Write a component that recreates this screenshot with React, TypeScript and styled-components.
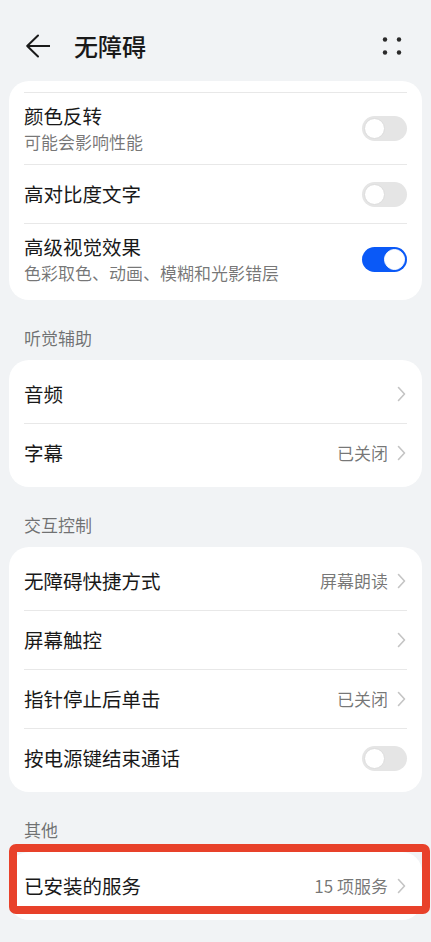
import * as React from 'react';
import styled, { createGlobalStyle } from 'styled-components';

const GlobalStyle = createGlobalStyle`
  html, body {
    margin: 0;
    padding: 0;
    background: #f1f3f5;
  }
  body {
    font-family: "Noto Sans CJK SC", "Noto Sans", "Liberation Sans", sans-serif;
    color: #191919;
    -webkit-font-smoothing: antialiased;
  }
`;

type Item = {
  title: string;
  sub?: string;
  value?: string;
  toggle?: boolean;
  on?: boolean;
};

type Section = {
  label?: string;
  clipped?: boolean;
  marked?: boolean;
  items: Item[];
};

const sections: Section[] = [
  {
    clipped: true,
    items: [
      { title: '颜色反转', sub: '可能会影响性能', toggle: true },
      { title: '高对比度文字', toggle: true },
      { title: '高级视觉效果', sub: '色彩取色、动画、模糊和光影错层', toggle: true, on: true },
    ],
  },
  {
    label: '听觉辅助',
    items: [{ title: '音频' }, { title: '字幕', value: '已关闭' }],
  },
  {
    label: '交互控制',
    items: [
      { title: '无障碍快捷方式', value: '屏幕朗读' },
      { title: '屏幕触控' },
      { title: '指针停止后单击', value: '已关闭' },
      { title: '按电源键结束通话', toggle: true },
    ],
  },
  {
    label: '其他',
    marked: true,
    items: [{ title: '已安装的服务', value: '15 项服务' }],
  },
];

const BackIcon = () => (
  <svg width="24" height="24" viewBox="0 0 24 24" fill="none">
    <path
      d="M12 1.5 L1.2 12 L12 22.5 M1.2 12 H24"
      stroke="#1a1a1a"
      strokeWidth="2"
      strokeLinecap="round"
      strokeLinejoin="round"
    />
  </svg>
);

const MoreIcon = () => (
  <svg width="24" height="24" viewBox="0 0 24 24" fill="#2a2a2a">
    <circle cx="5" cy="5.5" r="2.2" />
    <circle cx="19" cy="5.5" r="2.2" />
    <circle cx="5" cy="18.5" r="2.2" />
    <circle cx="19" cy="18.5" r="2.2" />
  </svg>
);

const Chevron = () => (
  <svg width="12" height="16" viewBox="0 0 12 16" fill="none">
    <path
      d="M2.5 1.5 L8.5 8 L2.5 14.5"
      stroke="#c4c4c4"
      strokeWidth="1.6"
      strokeLinecap="round"
      strokeLinejoin="round"
    />
  </svg>
);

const Accessibility: React.FC = () => {
  return (
    <Page>
      <GlobalStyle />
      <Header>
        <BackIcon />
        <Title>无障碍</Title>
        <HeaderSpacer />
        <MoreIcon />
      </Header>
      {sections.map((s, i) => (
        <React.Fragment key={i}>
          {s.label && <SectionLabel>{s.label}</SectionLabel>}
          <CardWrap>
            <Card $clipped={s.clipped}>
              {s.items.map((it) => (
                <Row key={it.title} $tall={!!it.sub}>
                  <TextCol>
                    <ItemTitle>{it.title}</ItemTitle>
                    {it.sub && <ItemSub>{it.sub}</ItemSub>}
                  </TextCol>
                  {it.toggle ? (
                    <Switch $on={it.on}>
                      <Knob $on={it.on} />
                    </Switch>
                  ) : (
                    <Trail>
                      {it.value && <Value>{it.value}</Value>}
                      <Chevron />
                    </Trail>
                  )}
                </Row>
              ))}
            </Card>
            {s.marked && <Highlight />}
          </CardWrap>
        </React.Fragment>
      ))}
    </Page>
  );
};

const Page = styled.div`
  width: 431px;
  min-height: 942px;
  padding: 0 9px;
  box-sizing: border-box;
  background: #f1f3f5;
`;

const Header = styled.header`
  display: flex;
  align-items: center;
  height: 70px;
  padding: 11px 18px 0 17px;
  svg {
    flex-shrink: 0;
  }
`;

const Title = styled.h1`
  margin: 0 0 0 24px;
  font-size: 24px;
  font-weight: 500;
  line-height: 32px;
  color: #191919;
`;

const HeaderSpacer = styled.div`
  flex: 1;
`;

const SectionLabel = styled.div`
  padding: 28px 15px 12px;
  font-size: 17px;
  line-height: 20px;
  color: rgba(0, 0, 0, 0.55);
`;

const CardWrap = styled.div`
  position: relative;
`;

const Card = styled.div<{ $clipped?: boolean }>`
  background: #ffffff;
  border-radius: 20px;
  padding: ${(p) => (p.$clipped ? '11px' : '4px')} 15px 5px;

  & > div:first-child {
    border-top: ${(p) => (p.$clipped ? '1px solid #e8e8e8' : 'none')};
  }
`;

const Row = styled.div<{ $tall?: boolean }>`
  display: flex;
  align-items: center;
  justify-content: space-between;
  min-height: ${(p) => (p.$tall ? '72px' : '59px')};
  box-sizing: border-box;

  & + & {
    border-top: 1px solid #e8e8e8;
  }
`;

const TextCol = styled.div`
  display: flex;
  flex-direction: column;
`;

const ItemTitle = styled.div`
  font-size: 19.5px;
  font-weight: 400;
  line-height: 26px;
  color: #191919;
`;

const ItemSub = styled.div`
  font-size: 17px;
  line-height: 26px;
  color: rgba(0, 0, 0, 0.55);
`;

const Trail = styled.div`
  display: flex;
  align-items: center;
  gap: 8px;
  margin-right: -1px;
`;

const Value = styled.span`
  font-size: 17px;
  line-height: 22px;
  color: rgba(0, 0, 0, 0.55);
`;

const Switch = styled.div<{ $on?: boolean }>`
  position: relative;
  width: 45px;
  height: 25px;
  border-radius: 13px;
  background: ${(p) => (p.$on ? '#0a59f7' : '#e5e5e5')};
  flex-shrink: 0;
`;

const Knob = styled.div<{ $on?: boolean }>`
  position: absolute;
  top: 2px;
  left: ${(p) => (p.$on ? '22px' : '2px')};
  width: 21px;
  height: 21px;
  border-radius: 50%;
  background: #ffffff;
  box-sizing: border-box;
  border: 1px solid ${(p) => (p.$on ? '#ffffff' : '#dcdcdc')};
`;

const Highlight = styled.div`
  position: absolute;
  left: 0;
  top: -8px;
  right: -8px;
  bottom: 6px;
  border: 8px solid #e8412a;
  border-radius: 7px;
  pointer-events: none;
`;

export default function App() {
  return <Accessibility />;
}
